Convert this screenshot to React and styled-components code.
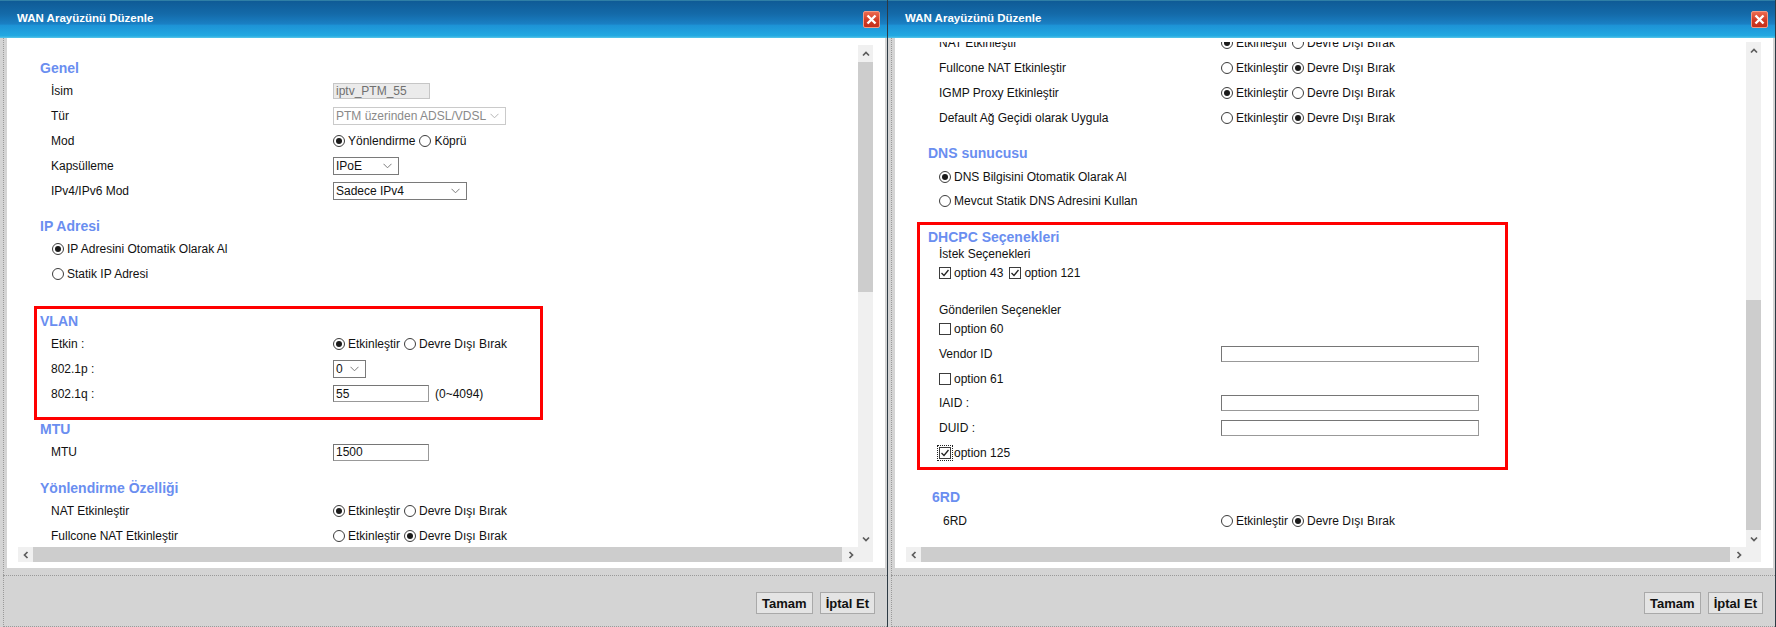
import React from "react"
import styled, { createGlobalStyle } from "styled-components"

const GlobalStyle = createGlobalStyle`
  html, body {
    margin: 0;
    padding: 0;
  }
  body {
    width: 1776px;
    height: 627px;
    overflow: hidden;
    background: #d4d4d4;
    font-family: "Liberation Sans", Arial, sans-serif;
    color: #111;
  }
`

const ROW = 24.8
const LABEL_COL = 282

const Page = styled.div`
  display: flex;
  width: 1776px;
  height: 627px;
`

const Dialog = styled.div`
  width: 888px;
  height: 627px;
  box-sizing: border-box;
  display: flex;
  flex-direction: column;
  background: #d4d4d4;
  border-right: 1px solid #2d3a44;
`

const TitleBar = styled.div`
  height: 38px;
  flex-shrink: 0;
  box-sizing: border-box;
  display: flex;
  align-items: center;
  justify-content: space-between;
  padding: 0 7px 0 17px;
  border-top: 1px solid #2f7fa6;
  background: linear-gradient(
    to bottom,
    #0f5b96 0%,
    #146aa9 35%,
    #1a80c4 62%,
    #1d93d6 66%,
    #22a9e2 94%,
    #58c6e8 100%
  );
`

const Title = styled.span`
  color: #fff;
  font-size: 11.5px;
  font-weight: bold;
  padding-bottom: 4px;
`

const CloseButton = styled.div`
  width: 17px;
  height: 17px;
  box-sizing: border-box;
  margin-bottom: 1px;
  display: flex;
  align-items: center;
  justify-content: center;
  border: 1px solid #f29a86;
  border-radius: 2px;
  background: linear-gradient(to bottom, #ec6a4f, #d23a24 55%, #c42f1c);
  cursor: pointer;
`

const Body = styled.div`
  flex: 1;
  min-height: 0;
  display: flex;
  margin-left: 3px;
  border-left: 1px dotted #9a9a9a;
  padding: 0 2px 7px 3px;
`

const Panel = styled.div`
  flex: 1;
  min-width: 0;
  display: flex;
  background: #fff;
  padding: ${(p) => p.$padTop}px 12px 6px 11px;
`

const ScrollFrame = styled.div`
  flex: 1;
  min-width: 0;
  display: grid;
  grid-template-columns: 1fr 15px;
  grid-template-rows: 1fr 15px;
`

const Viewport = styled.div`
  overflow: hidden;
  position: relative;
  min-height: 0;
`

const VBar = styled.div`
  display: flex;
  flex-direction: column;
  background: #f0f0f0;
`

const HBar = styled.div`
  display: flex;
  background: #f0f0f0;
`

const ArrowBox = styled.div`
  flex-shrink: 0;
  width: 15px;
  height: ${(p) => (p.$horizontal ? "15px" : "17px")};
  display: flex;
  align-items: center;
  justify-content: center;
  background: #f0f0f0;
`

const Track = styled.div`
  flex: 1;
  display: flex;
  flex-direction: ${(p) => (p.$horizontal ? "row" : "column")};
`

const Thumb = styled.div`
  background: #cdcdcd;
  flex-shrink: 0;
  ${(p) =>
    p.$horizontal
      ? "flex: 1; margin-right: 1px;"
      : `margin-top: ${p.$top}px; height: ${p.$size}px;`}
`

const Corner = styled.div`
  background: #f0f0f0;
`

const Footer = styled.div`
  height: 52px;
  flex-shrink: 0;
  box-sizing: border-box;
  display: flex;
  align-items: center;
  justify-content: flex-end;
  gap: 7px;
  margin-left: 3px;
  padding: 4px 12px 0 0;
  border-left: 1px dotted #9a9a9a;
  border-top: 1px dotted #9a9a9a;
  border-bottom: 1px dotted #9a9a9a;
`

const Button = styled.button`
  height: 22px;
  padding: 0 5px;
  font-family: "Liberation Sans", Arial, sans-serif;
  font-size: 13px;
  font-weight: bold;
  color: #111;
  background: #e4e4e4;
  border: 1px solid #a9a9a9;
`

/* form */

const FormContent = styled.div`
  padding-top: 12px;
  margin-top: ${(p) => -p.$offset}px;
  width: 860px;
`

const Section = styled.section`
  position: relative;
  margin-top: ${(p) => p.$gap ?? 12}px;
  padding-left: ${(p) => 22 + (p.$indent || 0)}px;

  &:first-child {
    margin-top: 0;
  }

  ${(p) =>
    p.$mark &&
    `
    &::after {
      content: "";
      position: absolute;
      top: ${p.$mark.top}px;
      left: ${p.$mark.left}px;
      width: ${p.$mark.width}px;
      bottom: ${-p.$mark.below}px;
      box-sizing: border-box;
      border: 3px solid #ff0000;
      pointer-events: none;
    }
  `}
`

const Heading = styled.h3`
  margin: 0;
  height: 22px;
  display: flex;
  align-items: center;
  font-size: 14px;
  font-weight: bold;
  color: #6a8ef0;
`

const Row = styled.div`
  display: grid;
  grid-template-columns: ${(p) => LABEL_COL - (p.$indent || 0)}px auto;
  align-items: center;
  height: ${ROW}px;
  padding-left: 11px;
  font-size: 12px;
  white-space: nowrap;
`

const Caption = styled.div`
  height: 13px;
  display: flex;
  align-items: center;
  padding-left: 11px;
  font-size: 12px;
`

const Spacer = styled.div`
  height: 18px;
`

const Controls = styled.div`
  display: flex;
  align-items: center;
  gap: ${(p) => p.$gap ?? 4}px;
`

const Choice = styled.label`
  display: inline-flex;
  align-items: center;
  gap: 3px;
  padding-left: ${(p) => p.$pad || 0}px;
`

const RadioDot = styled.span`
  width: 12px;
  height: 12px;
  box-sizing: border-box;
  border: 1px solid #3c3c3c;
  border-radius: 50%;
  background: #fff;
  display: flex;
  align-items: center;
  justify-content: center;

  &::after {
    content: "";
    width: 6px;
    height: 6px;
    border-radius: 50%;
    background: ${(p) => (p.$on ? "#1a1a1a" : "transparent")};
  }
`

const Box = styled.span`
  width: 12px;
  height: 12px;
  box-sizing: border-box;
  border: 1px solid #3c3c3c;
  background: #fff;
  display: flex;
  align-items: center;
  justify-content: center;
  outline: ${(p) => (p.$focus ? "1px dotted #222" : "none")};
  outline-offset: 1px;
`

const Field = styled.input`
  width: ${(p) => p.$w}px;
  height: ${(p) => p.$h || 17}px;
  box-sizing: border-box;
  margin: 0;
  padding: 0 2px;
  font-family: "Liberation Sans", Arial, sans-serif;
  font-size: 12px;
  color: ${(p) => (p.disabled ? "#707070" : "#111")};
  background: ${(p) => (p.disabled ? "#ebebeb" : "#fff")};
  border: 1px solid ${(p) => (p.disabled ? "#c6c6c6" : "#999")};
  border-top-color: ${(p) => (p.disabled ? "#c6c6c6" : "#767676")};
  border-left-color: ${(p) => (p.disabled ? "#c6c6c6" : "#767676")};
  outline: none;
`

const SelectBox = styled.div`
  width: ${(p) => p.$w}px;
  height: 18px;
  box-sizing: border-box;
  display: flex;
  align-items: center;
  justify-content: space-between;
  padding: 0 6px 0 2px;
  font-size: 12px;
  color: ${(p) => (p.$disabled ? "#8a8a8a" : "#111")};
  background: #fff;
  border: 1px solid ${(p) => (p.$disabled ? "#cacaca" : "#7a7a7a")};
`

const Hint = styled.span`
  margin-left: 6px;
`

const Chevron = ({ dir, color = "#5c5c5c" }) => {
  const points = {
    up: "1,5.5 4,2.5 7,5.5",
    down: "1,2.5 4,5.5 7,2.5",
    left: "5.5,1 2.5,4 5.5,7",
    right: "2.5,1 5.5,4 2.5,7",
  }[dir]
  return (
    <svg width="8" height="8" viewBox="0 0 8 8">
      <polyline points={points} fill="none" stroke={color} strokeWidth="1.7" />
    </svg>
  )
}

const Select = ({ value, w, disabled }) => (
  <SelectBox $w={w} $disabled={disabled}>
    <span>{value}</span>
    <svg width="9" height="6" viewBox="0 0 9 6">
      <polyline
        points="0.5,0.8 4.5,4.8 8.5,0.8"
        fill="none"
        stroke={disabled ? "#b5b5b5" : "#7c7c7c"}
        strokeWidth="1"
      />
    </svg>
  </SelectBox>
)

const Radio = ({ on, pad, children }) => (
  <Choice $pad={pad}>
    <RadioDot $on={on} />
    {children}
  </Choice>
)

const Check = ({ on, focus, children }) => (
  <Choice>
    <Box $focus={focus}>
      {on && (
        <svg width="10" height="10" viewBox="0 0 10 10">
          <polyline points="1.5,5 4,7.5 8.5,2" fill="none" stroke="#222" strokeWidth="1.3" />
        </svg>
      )}
    </Box>
    {children}
  </Choice>
)

const Toggle = ({ on }) => (
  <Controls>
    <Radio on={on}>Etkinleştir</Radio>
    <Radio on={!on}>Devre Dışı Bırak</Radio>
  </Controls>
)

const MARKS = {
  vlan: { top: -4, left: 16, width: 509, below: 14 },
  dhcpc: { top: -4, left: 11, width: 591, below: 5 },
}

const WanForm = ({ mark, offset }) => (
  <FormContent $offset={offset}>
    <Section>
      <Heading>Genel</Heading>
      <Row>
        <span>İsim</span>
        <Field $w={97} $h={16} disabled value="iptv_PTM_55" readOnly />
      </Row>
      <Row>
        <span>Tür</span>
        <Select w={173} value="PTM üzerinden ADSL/VDSL" disabled />
      </Row>
      <Row>
        <span>Mod</span>
        <Controls>
          <Radio on>Yönlendirme</Radio>
          <Radio>Köprü</Radio>
        </Controls>
      </Row>
      <Row>
        <span>Kapsülleme</span>
        <Select w={66} value="IPoE" />
      </Row>
      <Row>
        <span>IPv4/IPv6 Mod</span>
        <Select w={134} value="Sadece IPv4" />
      </Row>
    </Section>

    <Section>
      <Heading>IP Adresi</Heading>
      <Row>
        <Radio on pad={1}>IP Adresini Otomatik Olarak Al</Radio>
      </Row>
      <Row>
        <Radio pad={1}>Statik IP Adresi</Radio>
      </Row>
    </Section>

    <Section $gap={23} $mark={mark === "vlan" && MARKS.vlan}>
      <Heading>VLAN</Heading>
      <Row>
        <span>Etkin :</span>
        <Toggle on />
      </Row>
      <Row>
        <span>802.1p :</span>
        <Select w={33} value="0" />
      </Row>
      <Row>
        <span>802.1q :</span>
        <Controls $gap={0}>
          <Field $w={96} value="55" readOnly />
          <Hint>(0~4094)</Hint>
        </Controls>
      </Row>
    </Section>

    <Section>
      <Heading>MTU</Heading>
      <Row>
        <span>MTU</span>
        <Field $w={96} value="1500" readOnly />
      </Row>
    </Section>

    <Section>
      <Heading>Yönlendirme Özelliği</Heading>
      <Row>
        <span>NAT Etkinleştir</span>
        <Toggle on />
      </Row>
      <Row>
        <span>Fullcone NAT Etkinleştir</span>
        <Toggle />
      </Row>
      <Row>
        <span>IGMP Proxy Etkinleştir</span>
        <Toggle on />
      </Row>
      <Row>
        <span>Default Ağ Geçidi olarak Uygula</span>
        <Toggle />
      </Row>
    </Section>

    <Section>
      <Heading>DNS sunucusu</Heading>
      <Row>
        <Radio on>DNS Bilgisini Otomatik Olarak Al</Radio>
      </Row>
      <Row>
        <Radio>Mevcut Statik DNS Adresini Kullan</Radio>
      </Row>
    </Section>

    <Section $mark={mark === "dhcpc" && MARKS.dhcpc}>
      <Heading>DHCPC Seçenekleri</Heading>
      <Caption>İstek Seçenekleri</Caption>
      <Row>
        <Controls $gap={6}>
          <Check on>option 43</Check>
          <Check on>option 121</Check>
        </Controls>
      </Row>
      <Spacer />
      <Caption>Gönderilen Seçenekler</Caption>
      <Row>
        <Check>option 60</Check>
      </Row>
      <Row>
        <span>Vendor ID</span>
        <Field $w={258} $h={16} readOnly />
      </Row>
      <Row>
        <Check>option 61</Check>
      </Row>
      <Row>
        <span>IAID :</span>
        <Field $w={258} $h={16} readOnly />
      </Row>
      <Row>
        <span>DUID :</span>
        <Field $w={258} $h={16} readOnly />
      </Row>
      <Row>
        <Check on focus>
          option 125
        </Check>
      </Row>
    </Section>

    <Section $gap={21} $indent={4}>
      <Heading>6RD</Heading>
      <Row $indent={4}>
        <span>6RD</span>
        <Toggle />
      </Row>
    </Section>
  </FormContent>
)

const EditDialog = ({ mark, offset, padTop, thumbTop, thumbSize }) => (
  <Dialog>
    <TitleBar>
      <Title>WAN Arayüzünü Düzenle</Title>
      <CloseButton>
        <svg width="11" height="11" viewBox="0 0 11 11">
          <path d="M1.5 1.5 L9.5 9.5 M9.5 1.5 L1.5 9.5" stroke="#fff" strokeWidth="2.4" />
        </svg>
      </CloseButton>
    </TitleBar>
    <Body>
      <Panel $padTop={padTop}>
        <ScrollFrame>
          <Viewport>
            <WanForm mark={mark} offset={offset} />
          </Viewport>
          <VBar>
            <ArrowBox>
              <Chevron dir="up" />
            </ArrowBox>
            <Track>
              <Thumb $top={thumbTop} $size={thumbSize} />
            </Track>
            <ArrowBox>
              <Chevron dir="down" />
            </ArrowBox>
          </VBar>
          <HBar>
            <ArrowBox $horizontal>
              <Chevron dir="left" />
            </ArrowBox>
            <Track $horizontal>
              <Thumb $horizontal />
            </Track>
            <ArrowBox $horizontal>
              <Chevron dir="right" />
            </ArrowBox>
          </HBar>
          <Corner />
        </ScrollFrame>
      </Panel>
    </Body>
    <Footer>
      <Button>Tamam</Button>
      <Button>İptal Et</Button>
    </Footer>
  </Dialog>
)

export default function App() {
  return (
    <>
      <GlobalStyle />
      <Page>
        <EditDialog mark="vlan" offset={0} padTop={7} thumbTop={0} thumbSize={230} />
        <EditDialog mark="dhcpc" offset={464.7} padTop={4} thumbTop={241} thumbSize={230} />
      </Page>
    </>
  )
}
